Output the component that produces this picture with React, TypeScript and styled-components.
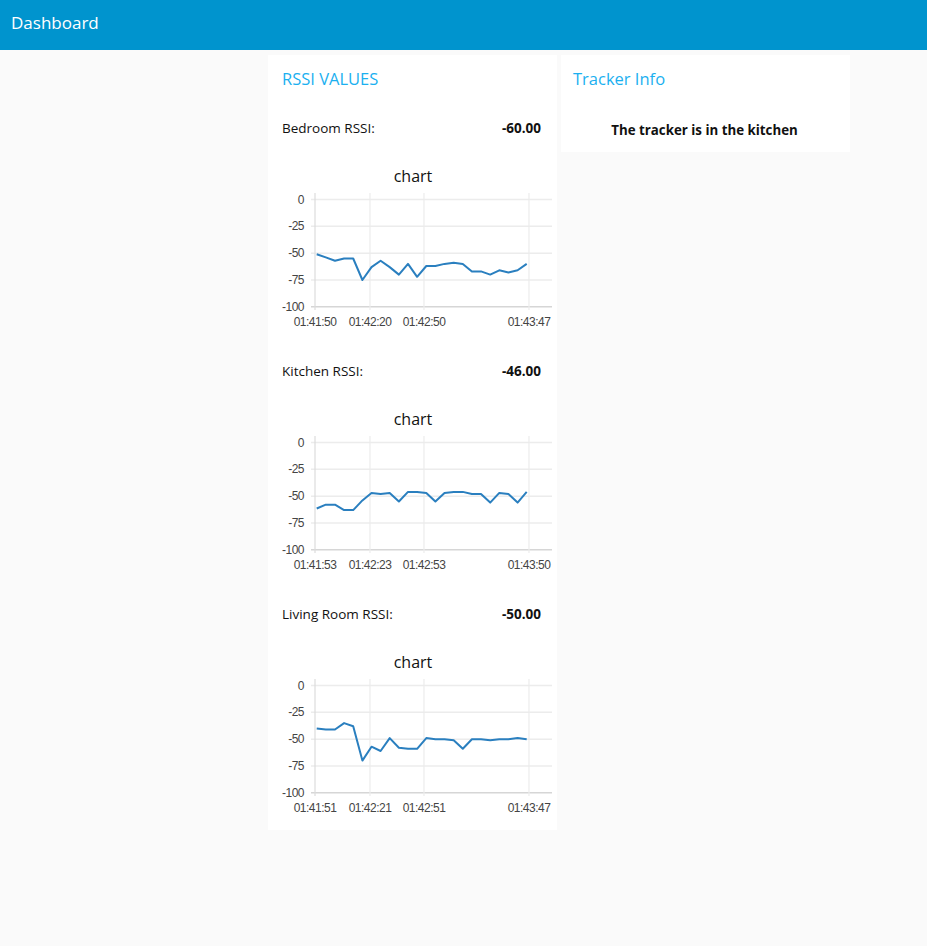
import styled, { createGlobalStyle } from "styled-components";

const GlobalStyle = createGlobalStyle`
  body {
    margin: 0;
    background-color: #fafafa;
    font-family: "Open Sans", "Noto Sans", sans-serif;
  }
`;

const Toolbar = styled.header`
  height: 50px;
  background-color: #0094ce;
  color: #fff;
  display: flex;
  align-items: center;
  padding: 0 0 6px 11px;
  box-sizing: border-box;
  font-size: 17px;
`;

const Content = styled.main`
  display: flex;
  align-items: flex-start;
  gap: 4px;
  padding: 5px 0 0 268px;
  min-height: 891px;
`;

const Card = styled.section`
  width: 289px;
  background-color: #fff;
  display: flex;
  flex-direction: column;
  gap: 3px;
`;

const GroupTitle = styled.h2<{ $pad?: number }>`
  margin: 0;
  height: 46px;
  display: flex;
  align-items: center;
  padding: 0 ${(p) => p.$pad ?? 14}px;
  font-size: 16.5px;
  font-weight: 500;
  color: #1bb0f0;
`;

const Row = styled.div<{ $center?: boolean }>`
  height: 48px;
  display: flex;
  align-items: center;
  justify-content: ${(p) => (p.$center ? "center" : "space-between")};
  padding: 0 16px 0 14px;
  font-size: 13.5px;
  color: #111;
`;

const Value = styled.span`
  font-weight: 700;
`;

const Notice = styled.span`
  font-weight: 700;
  font-size: 13.3px;
  padding-top: 4px;
`;

const ChartBox = styled.div`
  height: 189px;
  svg {
    display: block;
  }
`;

interface ISeries {
  label: string;
  value: string;
  times: string[];
  points: number[];
}

const series: ISeries[] = [
  {
    label: "Bedroom RSSI:",
    value: "-60.00",
    times: ["01:41:50", "01:42:20", "01:42:50", "01:43:47"],
    points: [
      -51, -54, -57, -55, -55, -75, -63, -57, -63, -70, -60, -72, -62, -62,
      -60, -59, -60, -67, -67, -70, -66, -68, -66, -60,
    ],
  },
  {
    label: "Kitchen RSSI:",
    value: "-46.00",
    times: ["01:41:53", "01:42:23", "01:42:53", "01:43:50"],
    points: [
      -61.5, -58, -58, -63, -63, -54, -47, -48, -47, -55, -46, -46, -47, -55,
      -47, -46, -46, -48, -48, -56, -47, -48, -56, -46,
    ],
  },
  {
    label: "Living Room RSSI:",
    value: "-50.00",
    times: ["01:41:51", "01:42:21", "01:42:51", "01:43:47"],
    points: [
      -40, -41, -41, -35, -38, -70, -57, -61, -49, -58, -59, -59, -49, -50,
      -50, -51, -59, -50, -50, -51, -50, -50, -49, -50,
    ],
  },
];

const gridX = [47, 102, 156, 261];
const ticks = [0, -25, -50, -75, -100];
const top = 44.5;
const span = 107.3;
const yOf = (v: number) => top + (-v / 100) * span;

function Chart({ times, points }: { times: string[]; points: number[] }) {
  const step = (258.7 - 48.7) / (points.length - 1);
  const path = points
    .map((v, i) => `${i ? "L" : "M"}${(48.7 + i * step).toFixed(1)} ${yOf(v).toFixed(1)}`)
    .join(" ");
  return (
    <ChartBox>
      <svg width="289" height="189" viewBox="0 0 289 189">
        <text
          x="145"
          y="27"
          textAnchor="middle"
          fontSize="16"
          fontFamily="Open Sans, sans-serif"
          fill="#111"
        >
          chart
        </text>
        {ticks.map((t) => (
          <g key={t}>
            <line
              x1="43"
              x2="284"
              y1={yOf(t)}
              y2={yOf(t)}
              stroke={t === -100 ? "#d6d6d6" : "#ececec"}
              strokeWidth="1.5"
            />
            <text
              x="36"
              y={yOf(t) + 4}
              textAnchor="end"
              fontSize="12"
              letterSpacing="-0.5"
              fontFamily="Liberation Sans, Arial, sans-serif"
              fill="#444"
            >
              {t}
            </text>
          </g>
        ))}
        {gridX.map((x, i) => (
          <g key={x}>
            <line
              x1={x}
              x2={x}
              y1="38"
              y2="155"
              stroke={i === 0 ? "#dcdcdc" : "#ececec"}
              strokeWidth="1.2"
            />
            <text
              x={x}
              y="171"
              textAnchor="middle"
              fontSize="12"
              letterSpacing="-0.5"
              fontFamily="Liberation Sans, Arial, sans-serif"
              fill="#444"
            >
              {times[i]}
            </text>
          </g>
        ))}
        <path
          d={path}
          fill="none"
          stroke="#2a7fbf"
          strokeWidth="2"
          strokeLinejoin="round"
        />
      </svg>
    </ChartBox>
  );
}

function App() {
  return (
    <>
      <GlobalStyle />
      <Toolbar>Dashboard</Toolbar>
      <Content>
        <Card>
          <GroupTitle>RSSI VALUES</GroupTitle>
          {series.map((s) => (
            <div key={s.label} style={{ display: "contents" }}>
              <Row>
                <span>{s.label}</span>
                <Value>{s.value}</Value>
              </Row>
              <Chart times={s.times} points={s.points} />
            </div>
          ))}
        </Card>
        <Card>
          <GroupTitle $pad={12}>Tracker Info</GroupTitle>
          <Row $center>
            <Notice>The tracker is in the kitchen</Notice>
          </Row>
        </Card>
      </Content>
    </>
  );
}

export default App;
